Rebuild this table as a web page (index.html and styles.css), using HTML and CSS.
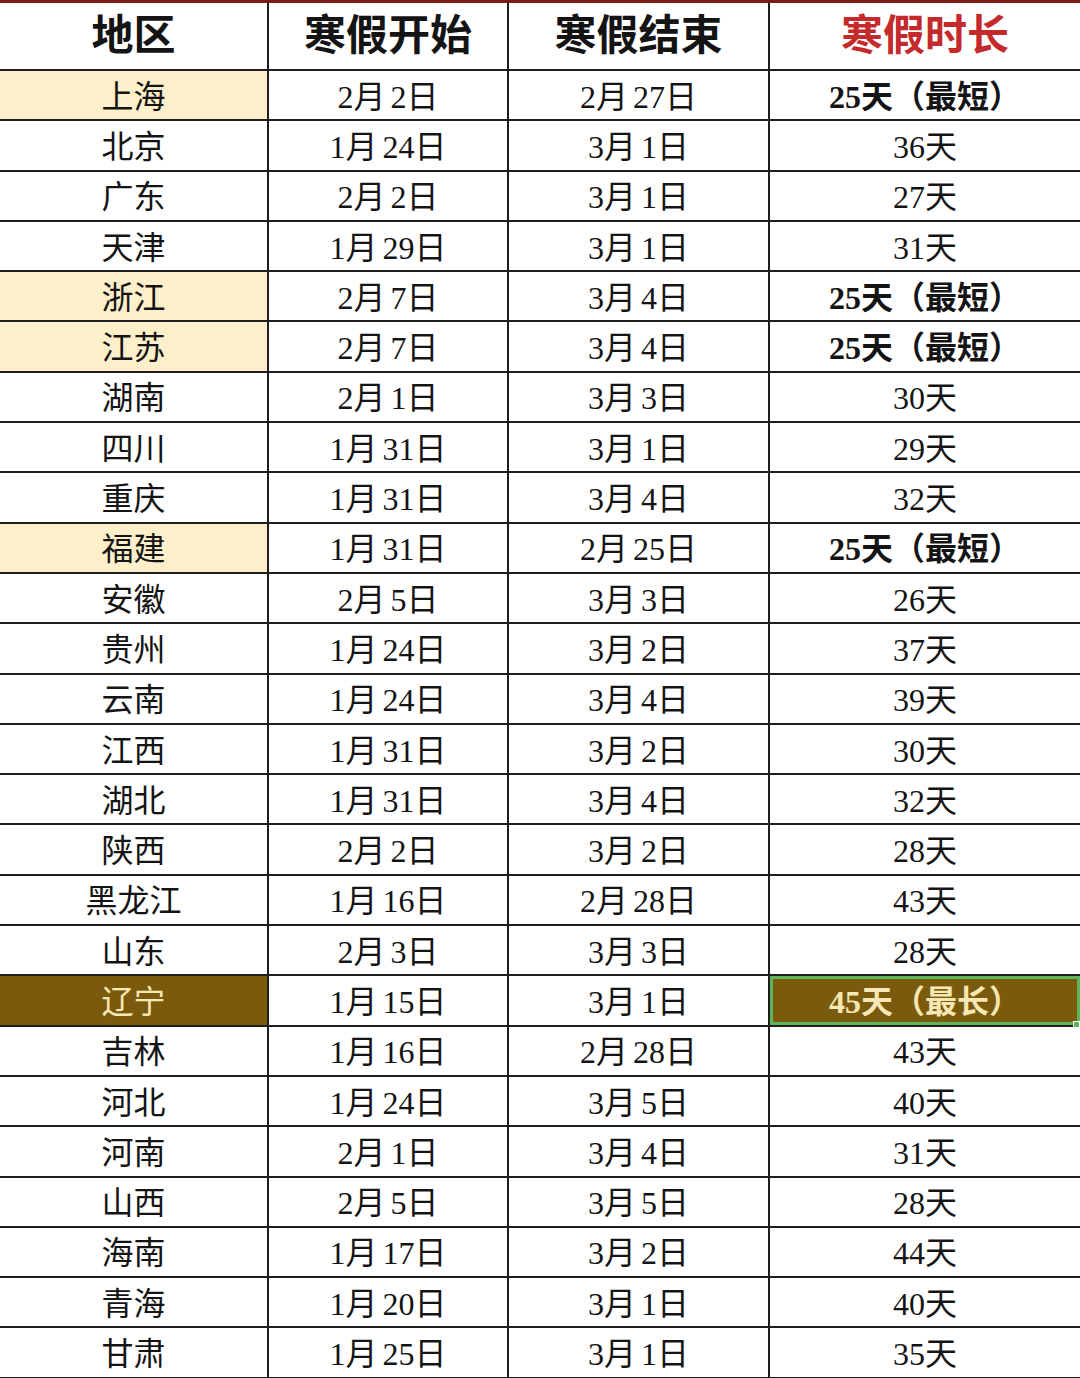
FILE: index.html
```html
<!DOCTYPE html>
<html lang="zh-CN">
<head>
<meta charset="utf-8">
<title>各地寒假时间</title>
<link rel="stylesheet" href="styles.css">
</head>
<body>
<div class="topline"></div>
<table class="holiday">
  <colgroup>
    <col class="c1"><col class="c2"><col class="c3"><col class="c4">
  </colgroup>
  <thead>
    <tr><th>地区</th><th>寒假开始</th><th>寒假结束</th><th class="red">寒假时长</th></tr>
  </thead>
  <tbody>
    <tr><td class="hl">上海</td><td>2月 2日</td><td>2月 27日</td><td class="b">25天（最短）</td></tr>
    <tr><td>北京</td><td>1月 24日</td><td>3月 1日</td><td>36天</td></tr>
    <tr><td>广东</td><td>2月 2日</td><td>3月 1日</td><td>27天</td></tr>
    <tr><td>天津</td><td>1月 29日</td><td>3月 1日</td><td>31天</td></tr>
    <tr><td class="hl">浙江</td><td>2月 7日</td><td>3月 4日</td><td class="b">25天（最短）</td></tr>
    <tr><td class="hl">江苏</td><td>2月 7日</td><td>3月 4日</td><td class="b">25天（最短）</td></tr>
    <tr><td>湖南</td><td>2月 1日</td><td>3月 3日</td><td>30天</td></tr>
    <tr><td>四川</td><td>1月 31日</td><td>3月 1日</td><td>29天</td></tr>
    <tr><td>重庆</td><td>1月 31日</td><td>3月 4日</td><td>32天</td></tr>
    <tr><td class="hl">福建</td><td>1月 31日</td><td>2月 25日</td><td class="b">25天（最短）</td></tr>
    <tr><td>安徽</td><td>2月 5日</td><td>3月 3日</td><td>26天</td></tr>
    <tr><td>贵州</td><td>1月 24日</td><td>3月 2日</td><td>37天</td></tr>
    <tr><td>云南</td><td>1月 24日</td><td>3月 4日</td><td>39天</td></tr>
    <tr><td>江西</td><td>1月 31日</td><td>3月 2日</td><td>30天</td></tr>
    <tr><td>湖北</td><td>1月 31日</td><td>3月 4日</td><td>32天</td></tr>
    <tr><td>陕西</td><td>2月 2日</td><td>3月 2日</td><td>28天</td></tr>
    <tr><td>黑龙江</td><td>1月 16日</td><td>2月 28日</td><td>43天</td></tr>
    <tr><td>山东</td><td>2月 3日</td><td>3月 3日</td><td>28天</td></tr>
    <tr><td class="dark">辽宁</td><td>1月 15日</td><td>3月 1日</td><td class="dark sel"><span class="cellbox">45天（最长）</span></td></tr>
    <tr><td>吉林</td><td>1月 16日</td><td>2月 28日</td><td>43天</td></tr>
    <tr><td>河北</td><td>1月 24日</td><td>3月 5日</td><td>40天</td></tr>
    <tr><td>河南</td><td>2月 1日</td><td>3月 4日</td><td>31天</td></tr>
    <tr><td>山西</td><td>2月 5日</td><td>3月 5日</td><td>28天</td></tr>
    <tr><td>海南</td><td>1月 17日</td><td>3月 2日</td><td>44天</td></tr>
    <tr><td>青海</td><td>1月 20日</td><td>3月 1日</td><td>40天</td></tr>
    <tr><td>甘肃</td><td>1月 25日</td><td>3月 1日</td><td>35天</td></tr>
  </tbody>
</table>
</body>
</html>
```
FILE: styles.css
```css
html, body {
  margin: 0;
  padding: 0;
  background: #ffffff;
  width: 1080px;
  height: 1378px;
  overflow: hidden;
}
.topline {
  height: 3px;
  background: #7e1c1c;
}
.holiday {
  width: 1080px;
  border-collapse: collapse;
  table-layout: fixed;
  font-family: "Liberation Serif", "Noto Sans CJK SC", serif;
  color: #141414;
}
.c1 { width: 268px; }
.c2 { width: 240px; }
.c3 { width: 261px; }
.c4 { width: 311px; }
.holiday th, .holiday td {
  border: 2px solid #1e1e1e;
  text-align: center;
  vertical-align: middle;
  padding: 0;
  white-space: nowrap;
}
.holiday tr > :first-child { border-left: none; }
.holiday tr > :last-child { border-right: none; }
.holiday thead th {
  border-top: none;
  height: 66px;
  font-size: 42px;
  font-weight: 700;
  line-height: 1;
}
.holiday th.red { color: #c42a2c; }
.holiday tbody tr { height: 50.3px; }
.holiday tbody td {
  height: 45.3px;
  font-size: 32px;
  line-height: 1;
  font-weight: 400;
  word-spacing: -3px;
  padding-top: 3px;
}
.holiday td.hl { background: #fdefc9; }
.holiday td.b { font-weight: 700; font-size: 32px; }
.holiday td.dark {
  background: #7a5a0c;
  color: #f6e7b4;
}
.holiday td.sel {
  font-weight: 700;
  position: relative;
  box-shadow: inset 0 0 0 3px #5fb55c;
}
.cellbox { display: inline-block; }
.holiday td.sel::after {
  content: "";
  position: absolute;
  right: 0;
  bottom: -3px;
  width: 5px;
  height: 5px;
  background: #5fb55c;
  border: 1px solid #ffffff;
}
```
